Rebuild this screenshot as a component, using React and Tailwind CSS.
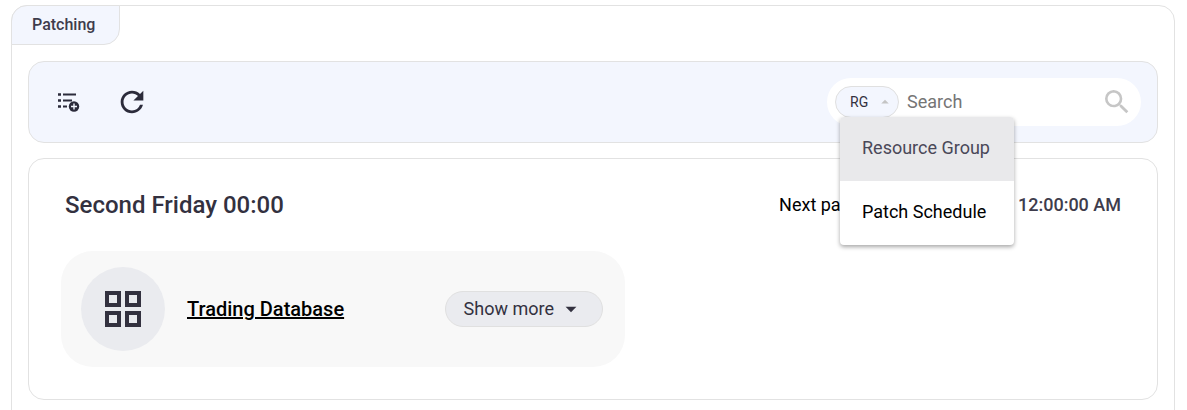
import React, { useState } from 'react';
import { MdArrowDropDown, MdArrowDropUp, MdRefresh, MdSearch } from 'react-icons/md';

const filters = [
  { id: 'RG', label: 'Resource Group' },
  { id: 'PS', label: 'Patch Schedule' },
];

function AddToListIcon() {
  return (
    <svg width="24" height="20" viewBox="0 0 24 20" fill="none" aria-hidden="true">
      <path d="M1 2.5h3M1 8.5h3M1 14.5h3" stroke="#2b2b3b" strokeWidth="2.4" />
      <path d="M6 2.5h13M6 8.5h9M6 14.5h4" stroke="#2b2b3b" strokeWidth="1.8" />
      <circle cx="17" cy="14.5" r="5.2" fill="#2b2b3b" />
      <path d="M17 11.5v6M14 14.5h6" stroke="#f3f6fe" strokeWidth="1.4" />
    </svg>
  );
}

function GroupIcon() {
  return (
    <svg width="38" height="38" viewBox="0 0 38 38" fill="none" stroke="#33313f" strokeWidth="4" aria-hidden="true">
      <rect x="3" y="3" width="12" height="12" />
      <rect x="23" y="3" width="12" height="12" />
      <rect x="3" y="23" width="12" height="12" />
      <rect x="23" y="23" width="12" height="12" />
    </svg>
  );
}

function SearchBox() {
  const [open, setOpen] = useState(true);
  const [selected, setSelected] = useState('RG');

  return (
    <div className="relative flex h-12 w-[314px] items-center rounded-full bg-white px-2">
      <button
        onClick={() => setOpen(!open)}
        aria-expanded={open}
        className="flex h-8 w-16 shrink-0 items-center justify-between rounded-full border border-[#e0e0e0] bg-[#f3f6fe] pr-1 pl-3.5 text-sm text-[#33313f]"
      >
        {selected}
        <MdArrowDropUp className="size-[18px] text-[#c4c4c4]" />
      </button>
      <input
        type="text"
        aria-label="Search"
        placeholder="Search"
        className="ml-2 w-0 flex-1 text-lg outline-none placeholder:text-[#757575]"
      />
      <button aria-label="Run search">
        <MdSearch className="size-8 text-[#c6c6c6]" />
      </button>

      {open && (
        <ul className="absolute top-[39px] left-[13px] z-10 w-[174px] overflow-hidden rounded bg-white text-lg shadow-[0_2px_4px_rgba(0,0,0,0.35)]">
          {filters.map((filter) => (
            <li key={filter.id}>
              <button
                onClick={() => {
                  setSelected(filter.id);
                  setOpen(false);
                }}
                className={`h-16 w-full px-[22px] pb-0.5 text-left whitespace-nowrap ${
                  filter.id === selected ? 'bg-[#e9e9eb] text-[#4a4858]' : 'text-black'
                }`}
              >
                {filter.label}
              </button>
            </li>
          ))}
        </ul>
      )}
    </div>
  );
}

export default function App() {
  return (
    <div className="h-screen overflow-hidden bg-white pt-[5px] pr-3 pl-[11px] font-[Roboto,sans-serif] text-black">
      <main className="rounded-t-2xl border border-[#e2e2e2] pb-4">
        <h1 className="-mt-px -ml-px w-fit rounded-tl-2xl rounded-br-2xl border border-[#e2e2e2] bg-[#f3f6fe] py-2 pr-6 pl-5 text-base leading-[22px] font-medium text-[#3e3c4c]">
          Patching
        </h1>

        <div className="mx-4 mt-4 flex items-center justify-between rounded-2xl border border-[#e2e2e2] bg-[#f3f6fe] py-4 pr-4 pl-7">
          <div className="flex items-center gap-[34px]">
            <button aria-label="Add to list">
              <AddToListIcon />
            </button>
            <button aria-label="Refresh">
              <MdRefresh className="size-[34px] text-[#2b2b3b]" />
            </button>
          </div>
          <SearchBox />
        </div>

        <section className="mx-4 mt-[15px] rounded-2xl border border-[#e2e2e2] px-8 pt-[30px] pb-8">
          <div className="flex items-center justify-between px-1">
            <h2 className="text-2xl font-medium text-[#33313f]">Second Friday 00:00</h2>
            <p className="text-lg">
              Next patching on: <span className="font-medium text-[#3e3c4c]">9/12/2025, 12:00:00 AM</span>
            </p>
          </div>

          <div className="mt-[30px] flex w-[564px] items-center rounded-[32px] bg-[#f8f8f8] py-4 pr-[22px] pl-5">
            <div className="flex size-[84px] items-center justify-center rounded-full bg-[#eaebef]">
              <GroupIcon />
            </div>
            <a href="#trading-database" className="ml-[22px] text-xl font-medium underline">
              Trading Database
            </a>
            <button className="ml-auto flex h-9 items-center gap-1 rounded-full border border-[#e0e0e0] bg-[#eaebef] px-[18px] text-lg text-[#33313f]">
              Show more
              <MdArrowDropDown className="size-[26px]" />
            </button>
          </div>
        </section>
      </main>
    </div>
  );
}
